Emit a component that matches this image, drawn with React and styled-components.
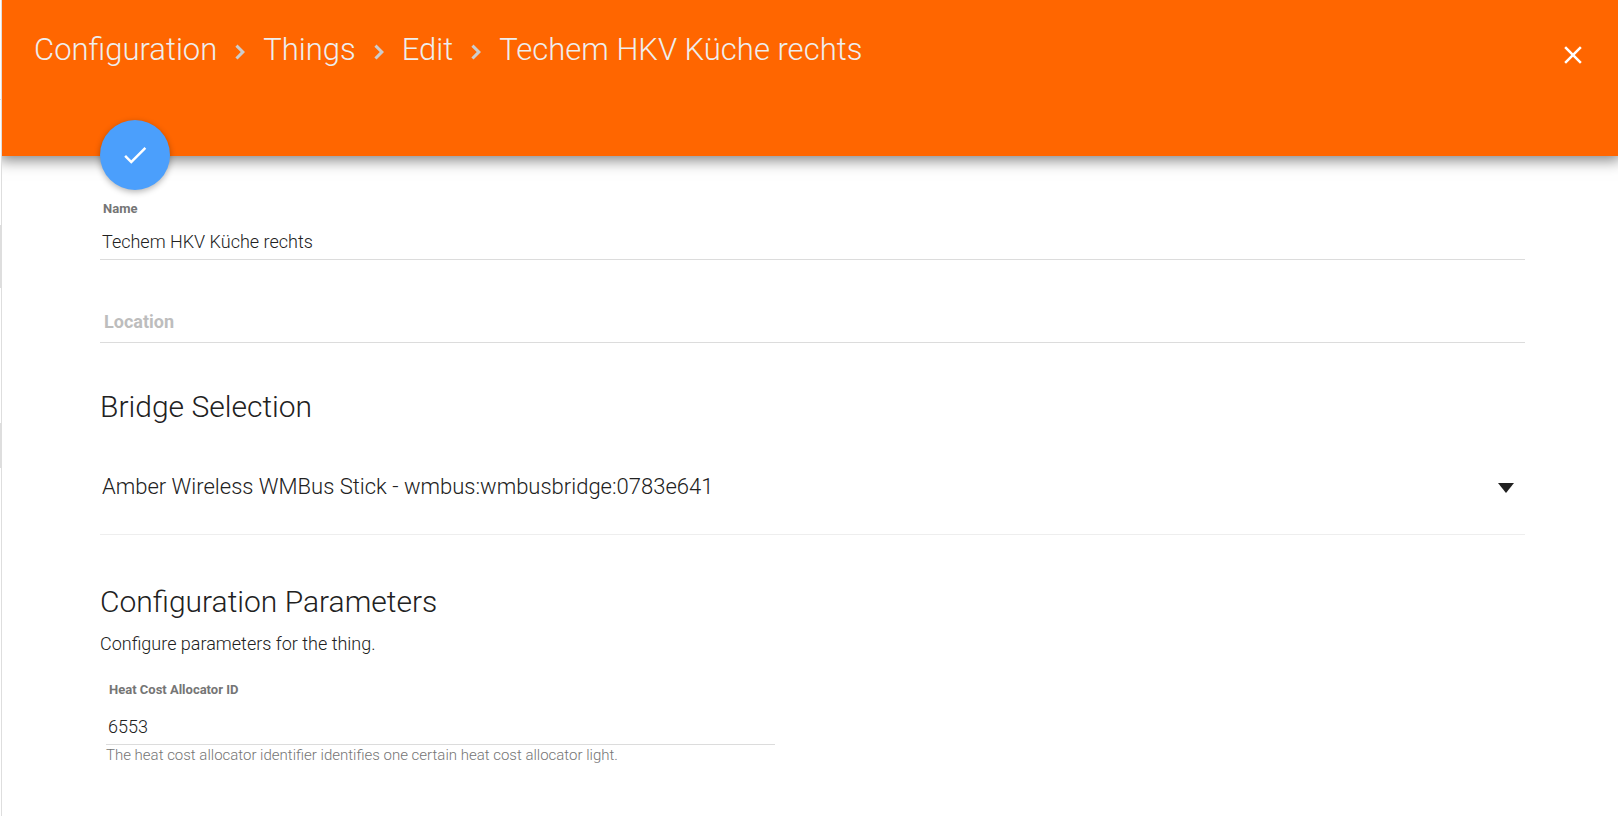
import { useState } from "react";
import styled, { createGlobalStyle } from "styled-components";

const GlobalStyle = createGlobalStyle`
  * {
    box-sizing: border-box;
  }
  body {
    margin: 0;
    background: #ffffff;
    color: #212121;
    font-family: Roboto, "Open Sans", sans-serif;
    font-weight: 300;
  }
  input,
  select,
  button {
    font: inherit;
    color: inherit;
  }
`;

const Page = styled.div`
  display: flex;
  min-height: 100vh;
`;

const Edge = styled.div`
  display: flex;
  flex-direction: column;
  width: 2px;
  border-right: 1px solid #dedede;
`;

const EdgeMark = styled.div`
  height: ${({ $size }) => $size}px;
  margin-top: ${({ $gap }) => $gap}px;
  background: #dedede;
`;

const Content = styled.main`
  flex: 1;
  min-width: 0;
  overflow: hidden;
`;

const Header = styled.header`
  display: flex;
  justify-content: space-between;
  align-items: flex-start;
  height: 156px;
  padding: 30px 30px 0 32px;
  background: #ff6600;
  color: #ffffff;
  box-shadow: 0 1px 14px 3px rgba(0, 0, 0, 0.5);
`;

const Breadcrumb = styled.nav`
  display: flex;
  align-items: center;
  color: #eeeeee;
  font-size: 31px;
  line-height: 40px;
`;

const Crumb = styled.a`
  color: inherit;
  text-decoration: none;
`;

const Separator = styled.svg`
  width: 30px;
  height: 30px;
  margin: 4px 8px 0;
  fill: #cccccc;
`;

const Icon = styled.svg`
  width: 30px;
  height: 30px;
  fill: #ffffff;
`;

const CloseButton = styled.button`
  display: flex;
  margin-top: 10px;
  padding: 0;
  border: 0;
  background: none;
  cursor: pointer;
`;

const Form = styled.form`
  padding: 0 93px 0 98px;
`;

const SaveButton = styled.button`
  position: relative;
  display: flex;
  align-items: center;
  justify-content: center;
  width: 70px;
  height: 70px;
  margin: -36px 0 11px;
  padding: 0;
  border: 0;
  border-radius: 50%;
  background: #4b9ffc;
  box-shadow: 0 2px 6px rgba(0, 0, 0, 0.3);
  cursor: pointer;
`;

const Field = styled.div`
  display: flex;
  flex-direction: column;
  gap: 7px;
`;

const Label = styled.label`
  padding: 0 3px;
  color: #757575;
  font-size: 13px;
  font-weight: 700;
  line-height: 16px;
`;

const Input = styled.input`
  width: 100%;
  height: 36px;
  padding: 0 2px;
  border: 0;
  border-bottom: 1px solid #dcdcdc;
  border-radius: 0;
  outline: none;
  background: none;
  font-size: 18px;
`;

const LocationInput = styled(Input)`
  height: 42px;
  margin-top: 41px;
  padding: 0 4px;
  &::placeholder {
    color: #bdbdbd;
    font-weight: 700;
    opacity: 1;
  }
`;

const Title = styled.h2`
  margin: 0;
  font-size: 30px;
  font-weight: 300;
  line-height: 40px;
`;

const Section = styled.section`
  margin-top: 44px;
`;

const SelectRow = styled.div`
  display: flex;
  align-items: center;
  margin-top: 11px;
  padding-right: 11px;
  border-bottom: 1px solid #eeeeee;
`;

const Select = styled.select`
  flex: 1;
  min-width: 0;
  height: 96px;
  padding: 0 2px;
  border: 0;
  outline: none;
  appearance: none;
  background: none;
  font-size: 22px;
`;

const Arrow = styled.svg`
  width: 16px;
  height: 10px;
  margin-top: 4px;
  fill: #212121;
  pointer-events: none;
`;

const Parameters = styled(Section)`
  margin-top: 47px;
`;

const Text = styled.p`
  margin: 10px 0 0;
  font-size: 18px;
  line-height: 24px;
`;

const ParameterField = styled(Field)`
  gap: 11px;
  width: calc(50% - 38px);
  margin-top: 26px;
  padding-left: 6px;
`;

const Help = styled.p`
  margin: 0;
  padding-left: 6px;
  color: #757575;
  font-size: 15px;
  line-height: 20px;
`;

function Chevron() {
  return (
    <Separator viewBox="0 0 24 24" aria-hidden="true">
      <path d="M8.3 16.3 10 18l6-6-6-6-1.7 1.7L12.6 12z" />
    </Separator>
  );
}

function App() {
  const [name, setName] = useState("Techem HKV Küche rechts");
  const [location, setLocation] = useState("");
  const [allocatorId, setAllocatorId] = useState("6553");

  return (
    <Page>
      <GlobalStyle />
      <Edge>
        <EdgeMark $gap={99} $size={1} />
        <EdgeMark $gap={125} $size={63} />
        <EdgeMark $gap={135} $size={45} />
      </Edge>
      <Content>
        <Header>
          <Breadcrumb>
            <Crumb href="#configuration">Configuration</Crumb>
            <Chevron />
            <Crumb href="#things">Things</Crumb>
            <Chevron />
            <Crumb href="#edit">Edit</Crumb>
            <Chevron />
            <span>Techem HKV Küche rechts</span>
          </Breadcrumb>
          <CloseButton type="button" aria-label="Close">
            <Icon viewBox="0 0 24 24">
              <path d="M19 6.41 17.59 5 12 10.59 6.41 5 5 6.41 10.59 12 5 17.59 6.41 19 12 13.41 17.59 19 19 17.59 13.41 12z" />
            </Icon>
          </CloseButton>
        </Header>
        <Form onSubmit={(e) => e.preventDefault()}>
          <SaveButton type="submit" aria-label="Save">
            <Icon viewBox="0 0 24 24">
              <path d="M9 16.2 4.8 12l-1.4 1.4L9 19 21 7l-1.4-1.4z" />
            </Icon>
          </SaveButton>
          <Field>
            <Label htmlFor="name">Name</Label>
            <Input
              id="name"
              value={name}
              onChange={(e) => setName(e.target.value)}
            />
          </Field>
          <LocationInput
            aria-label="Location"
            placeholder="Location"
            value={location}
            onChange={(e) => setLocation(e.target.value)}
          />
          <Section>
            <Title>Bridge Selection</Title>
            <SelectRow>
              <Select aria-label="Bridge Selection">
                <option>
                  Amber Wireless WMBus Stick - wmbus:wmbusbridge:0783e641
                </option>
              </Select>
              <Arrow viewBox="0 0 16 10">
                <path d="M0 0h16L8 10z" />
              </Arrow>
            </SelectRow>
          </Section>
          <Parameters>
            <Title>Configuration Parameters</Title>
            <Text>Configure parameters for the thing.</Text>
            <ParameterField>
              <Label htmlFor="allocator">Heat Cost Allocator ID</Label>
              <Input
                id="allocator"
                value={allocatorId}
                onChange={(e) => setAllocatorId(e.target.value)}
              />
            </ParameterField>
            <Help>
              The heat cost allocator identifier identifies one certain heat
              cost allocator light.
            </Help>
          </Parameters>
        </Form>
      </Content>
    </Page>
  );
}

export default App;
